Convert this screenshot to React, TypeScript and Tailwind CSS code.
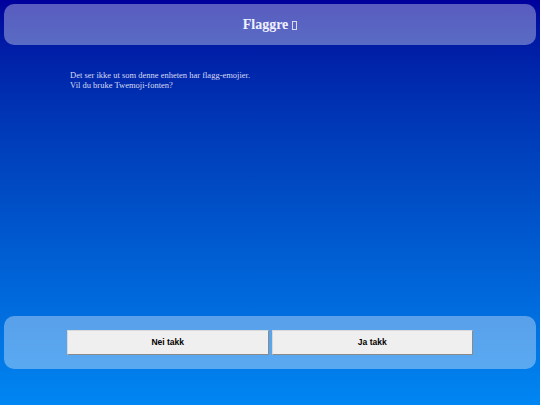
import React from 'react';

export default function App() {
  return (
    <div className="h-[405px] w-[540px] flex flex-col justify-between overflow-hidden bg-gradient-to-b from-[#00009c] to-[#0086f2] p-1 pb-9 font-['Liberation_Serif',serif]">
      <div>
        {/* Header */}
        <header className="h-[41px] rounded-[10px] bg-white/35 flex items-center justify-center">
          <h1 className="text-[14px] font-bold text-[#f0f0ff] flex items-center">
            Flaggre
            {/* missing glyph box */}
            <span className="ml-[4px] mt-[1px] inline-block w-[5px] h-[9px] border border-[#d8d8f0]" />
          </h1>
        </header>

        {/* Message */}
        <div className="px-[66px] pt-[25px] text-[8.5px] leading-[10px] text-[#d8daf2]">
          <p>Det ser ikke ut som denne enheten har flagg-emojier.</p>
          <p>Vil du bruke Twemoji-fonten?</p>
        </div>
      </div>

      {/* Choice panel */}
      <div className="h-[53px] rounded-[10px] bg-white/35 flex items-center justify-center">
        <div className="w-[406px] flex gap-[3px] font-['Liberation_Sans',sans-serif] text-[8.5px] font-bold text-black">
          <button className="h-[25px] flex-1 bg-[#efefef] border border-t-[#d8d8d8] border-l-[#d8d8d8] border-r-[#8a8a8a] border-b-[#8a8a8a]">
            Nei takk
          </button>
          <button className="h-[25px] flex-1 bg-[#efefef] border border-t-[#d8d8d8] border-l-[#d8d8d8] border-r-[#8a8a8a] border-b-[#8a8a8a]">
            Ja takk
          </button>
        </div>
      </div>
    </div>
  );
}
